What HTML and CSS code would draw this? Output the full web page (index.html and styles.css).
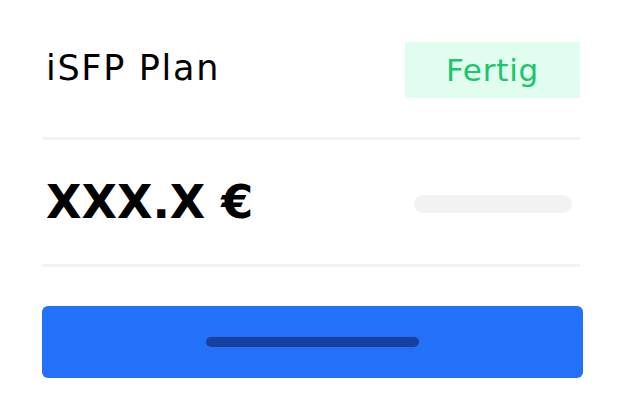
FILE: index.html
```html
<!DOCTYPE html>
<html lang="de">
<head>
    <meta charset="UTF-8">
    <meta name="viewport" content="width=device-width, initial-scale=1.0">
    <title>iSFP Plan</title>
    <link rel="stylesheet" href="styles.css">
</head>
<body>
    <div class="card">
        <div class="header">
            <div class="title">iSFP Plan</div>
            <div class="badge">Fertig</div>
        </div>
        <div class="divider"></div>
        <div class="price-row">
            <div class="price">XXX.X €</div>
            <div class="skeleton"></div>
        </div>
        <div class="divider"></div>
        <div class="button">
            <div class="button-bar"></div>
        </div>
    </div>
</body>
</html>
```

FILE: styles.css
```css
body {
    margin: 0;
    background: #fff;
    font-family: "DejaVu Sans", "Open Sans", sans-serif;
    color: #000;
}

.card {
    width: 541px;
    padding: 42px 0 0 42px;
}

.header {
    display: flex;
    justify-content: space-between;
    align-items: center;
    width: 538px;
    height: 56px;
}

.title {
    font-size: 35px;
    letter-spacing: 1.7px;
    padding-left: 4px;
    padding-bottom: 4px;
}

.badge {
    width: 175px;
    height: 56px;
    background: #e1fdf0;
    color: #1ac667;
    font-size: 31px;
    letter-spacing: 0.8px;
    display: flex;
    align-items: center;
    justify-content: center;
}

.divider {
    width: 538px;
    height: 3px;
    background: #f3f3f3;
    margin-top: 39px;
}

.price-row {
    display: flex;
    justify-content: space-between;
    align-items: center;
    width: 530px;
    height: 124px;
}

.price {
    font-size: 46px;
    font-weight: bold;
    padding-left: 4px;
}

.skeleton {
    width: 158px;
    height: 18px;
    margin-top: 4px;
    border-radius: 9px;
    background: #f2f2f2;
}

.price-row + .divider {
    margin-top: 0;
}

.button {
    margin-top: 39px;
    width: 541px;
    height: 72px;
    border-radius: 6px;
    background: #2371f9;
    display: flex;
    align-items: center;
    justify-content: center;
}

.button-bar {
    width: 213px;
    height: 10px;
    border-radius: 5px;
    background: #1a409f;
}
```
